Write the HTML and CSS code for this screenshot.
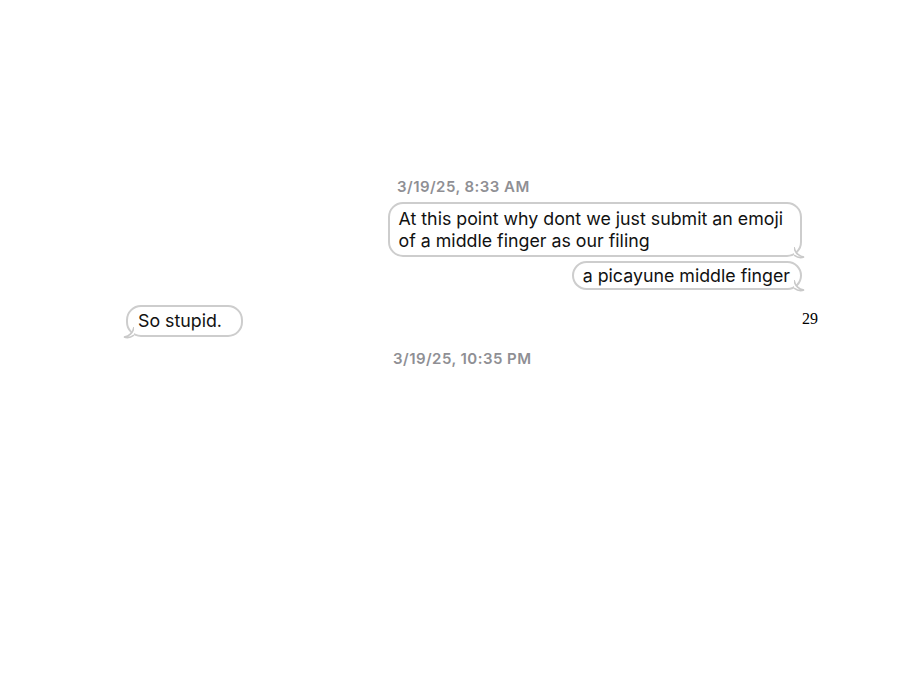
FILE: index.html
```html
<!DOCTYPE html>
<html>
<head>
<meta charset="utf-8">
<link rel="stylesheet" href="styles.css">
</head>
<body>
<div class="page">
  <div class="shot">
    <div class="ts ts-first">3/19/25, 8:33 AM</div>
    <div class="bubble out b-long">At this point why dont we just submit an emoji<br>of a middle finger as our filing<svg class="tail tail-r" width="12" height="12" viewBox="0 0 12 12"><path d="M0 0 C1 6 4 9 10 10 C7 11 3 10.5 0 8" fill="#fff" stroke="#c9c9c9" stroke-width="1.6"/></svg></div>
    <div class="bubble out b-short">a picayune middle finger<svg class="tail tail-r" width="12" height="12" viewBox="0 0 12 12"><path d="M0 0 C1 6 4 9 10 10 C7 11 3 10.5 0 8" fill="#fff" stroke="#c9c9c9" stroke-width="1.6"/></svg></div>
    <div class="bubble in b-left">So stupid.<svg class="tail tail-l" width="12" height="12" viewBox="0 0 12 12"><path d="M12 0 C11 6 8 9 2 10 C5 11 9 10.5 12 8" fill="#fff" stroke="#c9c9c9" stroke-width="1.6"/></svg></div>
    <div class="ts ts-second">3/19/25, 10:35 PM</div>
  </div>
  <div class="pagenum">29</div>
</div>
</body>
</html>
```
FILE: styles.css
```css
html, body {
  margin: 0;
  padding: 0;
  background: #fff;
}
.page {
  display: flex;
  align-items: flex-start;
  padding-top: 172px;
}
.shot {
  margin-left: 118px;
  width: 684px;
  padding-right: 6px;
  display: flex;
  flex-direction: column;
  font-family: Inter, "Liberation Sans", Arial, sans-serif;
}
.ts {
  font-size: 15px;
  font-weight: 600;
  letter-spacing: 0.45px;
  color: #8f8f94;
  line-height: 16px;
}
.ts-first {
  margin-top: 7px;
  margin-left: 279px;
}
.ts-second {
  margin-top: 14px;
  margin-left: 275px;
}
.bubble {
  position: relative;
  border: 2px solid #cdcdcd;
  border-radius: 15px;
  background: #fff;
  color: #111;
  font-size: 17.8px;
  line-height: 22px;
}
.out {
  align-self: flex-end;
}
.b-long {
  margin-top: 7px;
  padding: 4px 17px 3px 9px;
}
.b-short {
  margin-top: 4px;
  padding: 2px 10px 1px 9px;
}
.in {
  align-self: flex-start;
}
.b-left {
  margin-top: 15px;
  margin-left: 8px;
  padding: 3px 19px 3px 10px;
}
.tail {
  position: absolute;
  bottom: -4px;
}
.tail-r {
  right: -6px;
}
.tail-l {
  left: -6px;
}
.pagenum {
  margin-top: 138px;
  margin-left: -6px;
  font-family: "Liberation Serif", "Times New Roman", serif;
  font-size: 16px;
  color: #000;
}
```
